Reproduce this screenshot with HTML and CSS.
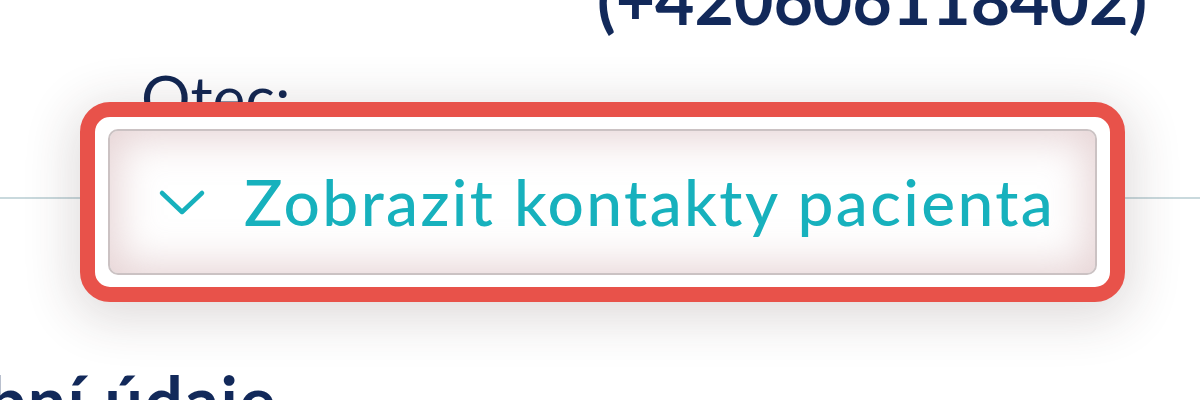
FILE: index.html
```html
<!DOCTYPE html>
<html lang="cs">
<head>
<meta charset="utf-8">
<title>Kontakty pacienta</title>
<link rel="stylesheet" href="styles.css">
</head>
<body>
<div class="page">
  <div class="phone">(+420606118402)</div>
  <div class="relation">Otec:</div>
  <div class="divider-row">
    <div class="divider-line"></div>
    <div class="highlight">
      <button class="toggle" type="button">
        <svg class="chevron" width="50" height="30" viewBox="0 0 50 30" aria-hidden="true">
          <polyline points="4,6 24,25 44,6" fill="none" stroke="currentColor" stroke-width="4.5" stroke-linecap="round" stroke-linejoin="round"/>
        </svg>
        <span class="toggle-label">Zobrazit kontakty pacienta</span>
      </button>
    </div>
    <div class="divider-line"></div>
  </div>
  <h2 class="section-title"><span>Osobní údaje</span></h2>
</div>
</body>
</html>
```
FILE: styles.css
```css
html, body {
  margin: 0;
  padding: 0;
  background: #ffffff;
}

body {
  width: 1200px;
  height: 400px;
  overflow: hidden;
  font-family: "Lato", "Liberation Sans", sans-serif;
}

.page {
  display: flex;
  flex-direction: column;
}

.phone {
  margin: -35px 0 0 597px;
  font-size: 68px;
  line-height: 1;
  font-weight: 700;
  color: #12295a;
  white-space: nowrap;
}

.relation {
  margin: 33px 0 0 141px;
  font-size: 62px;
  line-height: 1;
  font-weight: 400;
  color: #112652;
}

.divider-row {
  margin-top: -26px;
  display: grid;
  grid-template-columns: 80px 1045px 1fr;
  height: 200px;
}

.divider-line {
  margin-top: 95px;
  height: 2px;
  background: #c9d9dd;
}

.highlight {
  position: relative;
  box-sizing: border-box;
  height: 200px;
  border: 15px solid #e8524a;
  border-radius: 30px;
  padding: 12px 13px;
  background: #ffffff;
  box-shadow: 0 10px 50px 8px rgba(60, 40, 40, 0.16);
  display: flex;
}

.toggle {
  flex: 1;
  display: flex;
  align-items: center;
  gap: 36px;
  padding: 0 0 0 48px;
  margin: 0;
  border: 2px solid #cbc2c3;
  border-radius: 10px;
  background: #ffffff;
  box-shadow: inset 0 0 42px 8px rgba(196, 150, 152, 0.42);
  color: #17b1bd;
  font-family: inherit;
  cursor: pointer;
}

.chevron {
  display: block;
  flex: none;
}

.toggle-label {
  font-size: 64px;
  line-height: 1;
  font-weight: 500;
  letter-spacing: 2.4px;
  color: #17b1bd;
  white-space: nowrap;
}

.section-title {
  margin: 64px 0 0 0;
  width: 277px;
  display: flex;
  justify-content: flex-end;
  font-size: 68px;
  line-height: 1;
  font-weight: 700;
  letter-spacing: 1.5px;
  color: #12295a;
  white-space: nowrap;
}
```
